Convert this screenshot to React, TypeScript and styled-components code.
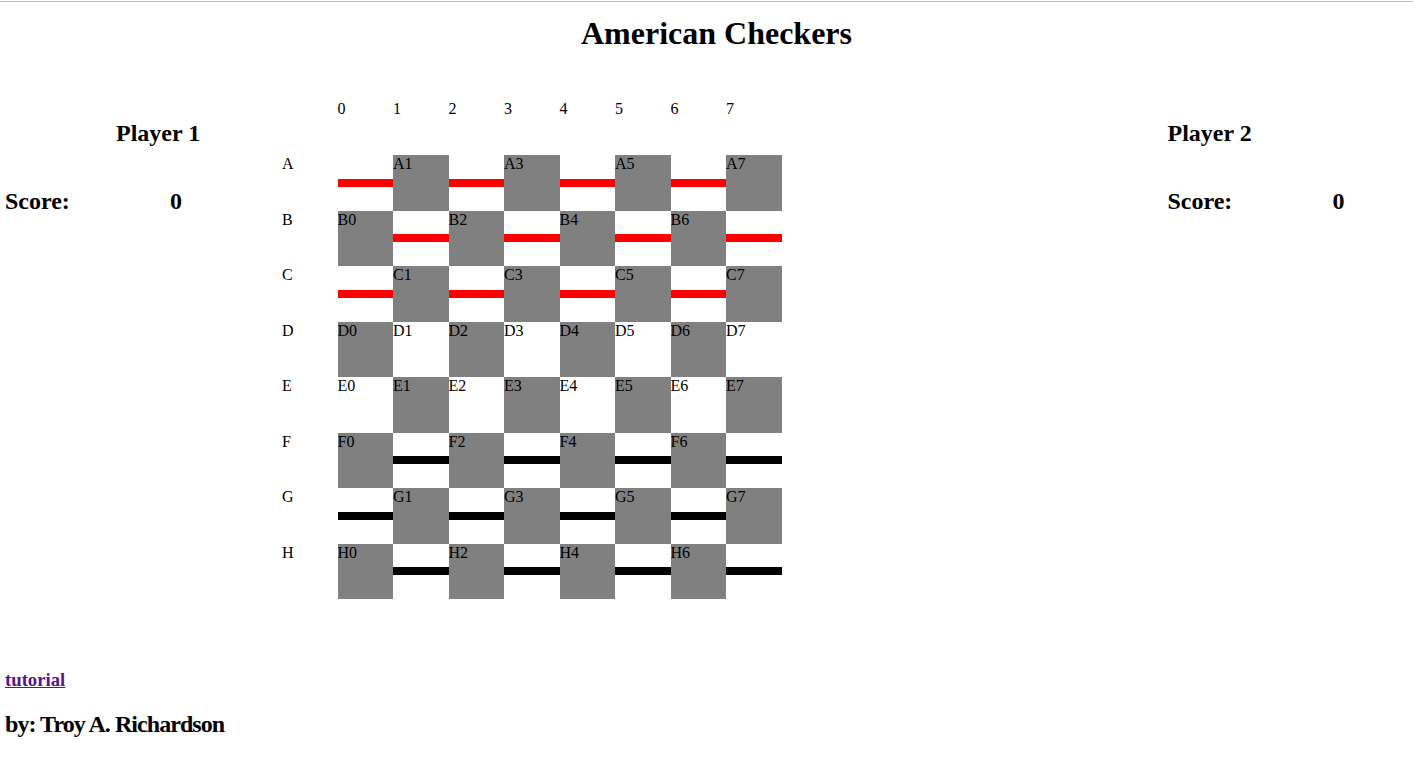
import { createGlobalStyle, styled } from "styled-components";

const ROWS = ["A", "B", "C", "D", "E", "F", "G", "H"];
const COLS = [0, 1, 2, 3, 4, 5, 6, 7];

const GlobalStyle = createGlobalStyle`
  html, body {
    margin: 0;
    padding: 0;
    background: #ffffff;
  }
  body {
    font-family: "Liberation Serif", "Times New Roman", serif;
    font-size: 16px;
    color: #000000;
  }
`;

type PieceColor = "red" | "black" | null;

const pieceFor = (row: number, col: number): PieceColor => {
  const dark = (row + col) % 2 === 1;
  if (dark) return null;
  if (row < 3) return "red";
  if (row > 4) return "black";
  return null;
};

export default function App() {
  return (
    <Page>
      <GlobalStyle />
      <TopRule />
      <Title>American Checkers</Title>
      <MainRow>
        <PlayerPanel>
          <PlayerName $indent={111}>Player 1</PlayerName>
          <ScoreRow>
            <span>Score:</span>
            <span>0</span>
          </ScoreRow>
        </PlayerPanel>

        <Board>
          <Corner />
          {COLS.map((c) => (
            <ColLabel key={c}>{c}</ColLabel>
          ))}
          {ROWS.map((r, ri) => (
            <RowGroup key={r}>
              <RowLabel>{r}</RowLabel>
              {COLS.map((c) => {
                const dark = (ri + c) % 2 === 1;
                const piece = pieceFor(ri, c);
                return (
                  <Cell key={c} $dark={dark}>
                    {piece ? <Piece $color={piece} /> : `${r}${c}`}
                  </Cell>
                );
              })}
            </RowGroup>
          ))}
        </Board>

        <PlayerPanel $right>
          <PlayerName $indent={0}>Player 2</PlayerName>
          <ScoreRow>
            <span>Score:</span>
            <span>0</span>
          </ScoreRow>
        </PlayerPanel>
      </MainRow>

      <Footer>
        <TutorialLink href="#">tutorial</TutorialLink>
        <Byline>by: Troy A. Richardson</Byline>
      </Footer>
    </Page>
  );
}

const Page = styled.div`
  padding: 1px 0 0;
  min-height: 768px;
`;

const TopRule = styled.div`
  height: 1px;
  background-color: #bdbdbd;
`;

const Title = styled.h1`
  margin: 13px 0 0;
  padding-left: 20px;
  text-align: center;
  font-size: 32px;
  font-weight: bold;
  line-height: normal;
`;

const MainRow = styled.div`
  display: flex;
  flex-direction: row;
  align-items: flex-start;
  margin-top: 47.5px;
  padding-left: 5px;
`;

const PlayerPanel = styled.div<{ $right?: boolean }>`
  width: ${({ $right }) => ($right ? "auto" : "277px")};
  margin-left: ${({ $right }) => ($right ? "386px" : "0")};
  padding-top: 20.5px;
  display: flex;
  flex-direction: column;
  font-size: 24px;
  font-weight: bold;
`;

const PlayerName = styled.div<{ $indent: number }>`
  padding-left: ${({ $indent }) => $indent}px;
`;

const ScoreRow = styled.div`
  margin-top: 41px;
  display: grid;
  grid-template-columns: 165px auto;
`;

const Board = styled.div`
  display: grid;
  grid-template-columns: repeat(9, 55.5px);
  grid-auto-rows: 55.5px;
  font-size: 16px;
`;

const Corner = styled.div``;

const ColLabel = styled.div``;

const RowGroup = styled.div`
  display: contents;
`;

const RowLabel = styled.div``;

const Cell = styled.div<{ $dark: boolean }>`
  background-color: ${({ $dark }) => ($dark ? "#808080" : "#ffffff")};
  display: flex;
  align-items: flex-start;
  overflow: hidden;
`;

const Piece = styled.span<{ $color: "red" | "black" }>`
  display: block;
  width: 100%;
  height: 8px;
  align-self: center;
  background-color: ${({ $color }) => ($color === "red" ? "#ff0000" : "#000000")};
`;

const Footer = styled.div`
  padding-left: 5px;
  margin-top: 70px;
  display: flex;
  flex-direction: column;
  align-items: flex-start;
`;

const TutorialLink = styled.a`
  font-size: 18.72px;
  font-weight: bold;
  color: #5a138f;
  text-decoration: underline;
`;

const Byline = styled.div`
  margin-top: 20px;
  font-size: 24px;
  font-weight: bold;
  letter-spacing: -0.95px;
`;
